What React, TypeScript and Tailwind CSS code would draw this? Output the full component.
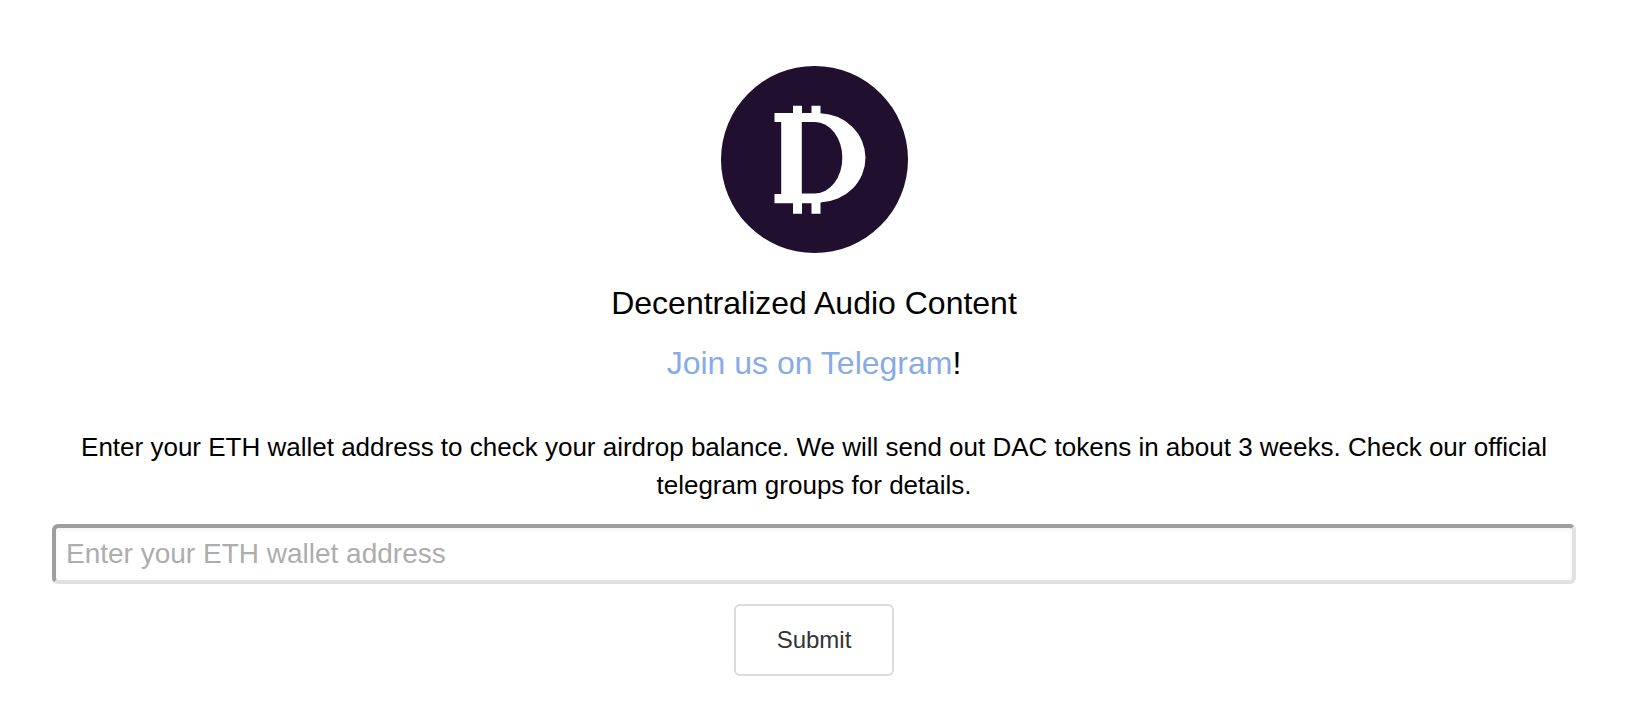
import { useState } from "react";

function Logo() {
  return (
    <svg viewBox="0 0 187 187" className="size-[187px]" role="img" aria-label="DAC logo">
      <circle cx="93.5" cy="93.5" r="93.5" fill="#200f2e" />
      <path
        fill="#fff"
        fillRule="evenodd"
        d="M53.5 47H72V39.7H81V47H90.500V39.700H99.500V47.200A47 44.700 0 0 1 144.500 91.800A47 44.700 0 0 1 99.500 136.500V147.800H90.500V137.300H81V147.800H72V137.300H53.500V128H60.200V56H53.500ZM80.800 56V127.500H94A27.300 35.700 0 0 0 94 56Z"
      />
    </svg>
  );
}

export default function App() {
  const [address, setAddress] = useState("");

  return (
    <main className="flex flex-col items-center bg-white pt-[66px] pr-14 pb-8 pl-[52px] text-center font-['Liberation_Sans',Arial,sans-serif] text-black">
      <Logo />
      <h1 className="mt-5 text-[32px] leading-[60px]">Decentralized Audio Content</h1>
      <p className="text-[32px] leading-[60px]">
        <a href="#telegram" className="text-[#86abe8]">
          Join us on Telegram
        </a>
        !
      </p>
      <form
        className="mt-[35px] flex w-full flex-col items-center"
        onSubmit={(e) => e.preventDefault()}
      >
        <label htmlFor="wallet" className="px-5 text-[26px] leading-[38px]">
          Enter your ETH wallet address to check your airdrop balance. We will send out DAC tokens in
          about 3 weeks. Check our official telegram groups for details.
        </label>
        <input
          id="wallet"
          type="text"
          value={address}
          onChange={(e) => setAddress(e.target.value)}
          placeholder="Enter your ETH wallet address"
          className="mt-5 h-[60px] w-full rounded-md border-4 border-t-[#9e9e9e] border-r-[#e1e1e1] border-b-[#e1e1e1] border-l-[#9e9e9e] bg-white px-[10px] text-[28px] shadow-[inset_0_2px_4px_rgba(0,0,0,0.06)] placeholder:text-[#adadad]"
        />
        <button
          type="submit"
          className="mt-5 h-[72px] w-40 rounded-md border-2 border-[#dbdbdb] bg-white text-2xl text-[#333333]"
        >
          Submit
        </button>
      </form>
    </main>
  );
}
